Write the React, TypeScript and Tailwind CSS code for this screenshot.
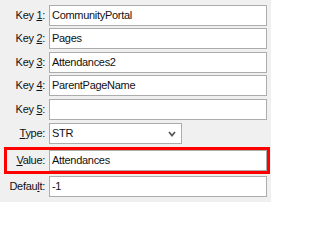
import { ReactNode } from 'react'

type Field = {
  label: ReactNode
  value?: string
  kind?: 'text' | 'select'
  gap: string
  highlight?: boolean
}

const fields: Field[] = [
  { label: <>Key <u>1</u>:</>, value: 'CommunityPortal', gap: 'mt-[5px]' },
  { label: <>Key <u>2</u>:</>, value: 'Pages', gap: 'mt-[2px]' },
  { label: <>Key <u>3</u>:</>, value: 'Attendances2', gap: 'mt-[3px]' },
  { label: <>Key <u>4</u>:</>, value: 'ParentPageName', gap: 'mt-[2px]' },
  { label: <>Key <u>5</u>:</>, value: '', gap: 'mt-[3px]' },
  { label: <><u>T</u>ype:</>, value: 'STR', kind: 'select', gap: 'mt-[3px]' },
  { label: <><u>V</u>alue:</>, value: 'Attendances', gap: 'mt-[3px]', highlight: true },
  { label: <>Defau<u>l</u>t:</>, value: '-1', gap: 'mt-[2px]' },
]

function Chevron() {
  return (
    <svg width="8" height="6" viewBox="0 0 8 6" className="text-[#5a5a5a]">
      <path d="M1 1 L4 4.5 L7 1" fill="none" stroke="currentColor" strokeWidth="1.8" />
    </svg>
  )
}

export default function App() {
  return (
    <div
      className="w-[271px] h-[202px] bg-[#f0f0f0] pl-[4px] pr-[1px] overflow-hidden text-[11px] tracking-[-0.3px] text-[#111]"
      style={{ fontFamily: '"Liberation Sans", Arial, sans-serif' }}
    >
      {fields.map((f, i) => (
        <div
          key={i}
          className={`flex items-center ${f.gap} ${
            f.highlight ? 'border-[3px] border-[#ff0000]' : 'border-x-[3px] border-transparent'
          }`}
        >
          <div className="w-[42px] pr-[4px] text-right leading-none whitespace-nowrap">{f.label}</div>
          {f.kind === 'select' ? (
            <div className="w-[133px] h-[21px] border border-[#acacac] bg-white flex items-center justify-between pl-[2px] pr-[5px]">
              <span className="leading-none">{f.value}</span>
              <Chevron />
            </div>
          ) : (
            <div className="flex-1 h-[21px] border border-[#acacac] bg-white flex items-center pl-[2px]">
              <span className="leading-none">{f.value}</span>
            </div>
          )}
        </div>
      ))}
    </div>
  )
}
